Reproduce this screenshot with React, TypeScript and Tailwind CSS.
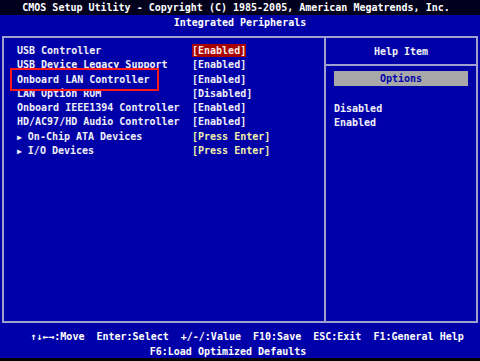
import React from "react";

const rows: { name: string; value: string; arrow?: boolean; press?: boolean }[] = [
  { name: "USB Controller", value: "[Enabled]" },
  { name: "USB Device Legacy Support", value: "[Enabled]" },
  { name: "Onboard LAN Controller", value: "[Enabled]" },
  { name: "LAN Option ROM", value: "[Disabled]" },
  { name: "Onboard IEEE1394 Controller", value: "[Enabled]" },
  { name: "HD/AC97/HD Audio Controller", value: "[Enabled]" },
  { name: "On-Chip ATA Devices", value: "[Press Enter]", arrow: true, press: true },
  { name: "I/O Devices", value: "[Press Enter]", arrow: true, press: true },
];

export default function App() {
  return (
    <div
      className="relative w-[480px] h-[361px] overflow-hidden bg-[#0000a8] text-[10px] font-bold text-[#f0f0f8] whitespace-pre flex flex-col"
      style={{ fontFamily: '"DejaVu Sans Mono", "Liberation Mono", monospace' }}
    >
      <div className="h-[15px] bg-[#00001c] text-center leading-[15px] text-white pr-[8px]">
        CMOS Setup Utility - Copyright (C) 1985-2005, American Megatrends, Inc.
      </div>
      <div className="h-[21px] text-center leading-[16px] text-white">Integrated Peripherals</div>

      <div className="mx-[2px] h-[287px] border-2 border-[#a0a0d0] flex">
        <div className="w-[322px] border-r-2 border-[#a0a0d0] pt-[6px] pl-[13px]">
          {rows.map((r, i) => (
            <div key={i} className="flex h-[14.3px] leading-[14.3px]">
              <div className="w-[175px]">
                {r.arrow ? (
                  <span>
                    <span className="text-[8px]">▶</span>
                    {" " + r.name}
                  </span>
                ) : (
                  r.name
                )}
              </div>
              <div
                className={
                  i === 0
                    ? "bg-[#a80000] text-[#f8e8e8] h-[13px] leading-[13px]"
                    : r.press
                    ? "text-[#f0f0a8]"
                    : "text-[#f0f0f8]"
                }
              >
                {r.value}
              </div>
            </div>
          ))}
        </div>
        <div className="flex-1 flex flex-col">
          <div className="h-[28px] border-b-2 border-[#a0a0d0] text-center leading-[26px] pt-[1px]">Help Item</div>
          <div className="px-[8px] pt-[5px]">
            <div className="h-[15px] bg-[#a8a8a8] text-[#0000a8] text-center leading-[15px]">Options</div>
            <div className="mt-[16px] leading-[14.3px]">Disabled</div>
            <div className="leading-[14.3px]">Enabled</div>
          </div>
        </div>
      </div>

      <div className="pt-[6px] text-center text-white leading-[15px]">
        <div className="pl-[14px]">↑↓←→:Move  Enter:Select  +/-/:Value  F10:Save  ESC:Exit  F1:General Help</div>
        <div className="pr-[24px]">F6:Load Optimized Defaults</div>
      </div>
      <div className="absolute left-0 right-0 bottom-0 h-[3px] bg-black" />

      <div className="absolute left-[10px] top-[68px] w-[149px] h-[23px] border-2 border-[#ff1818]" />
    </div>
  );
}
